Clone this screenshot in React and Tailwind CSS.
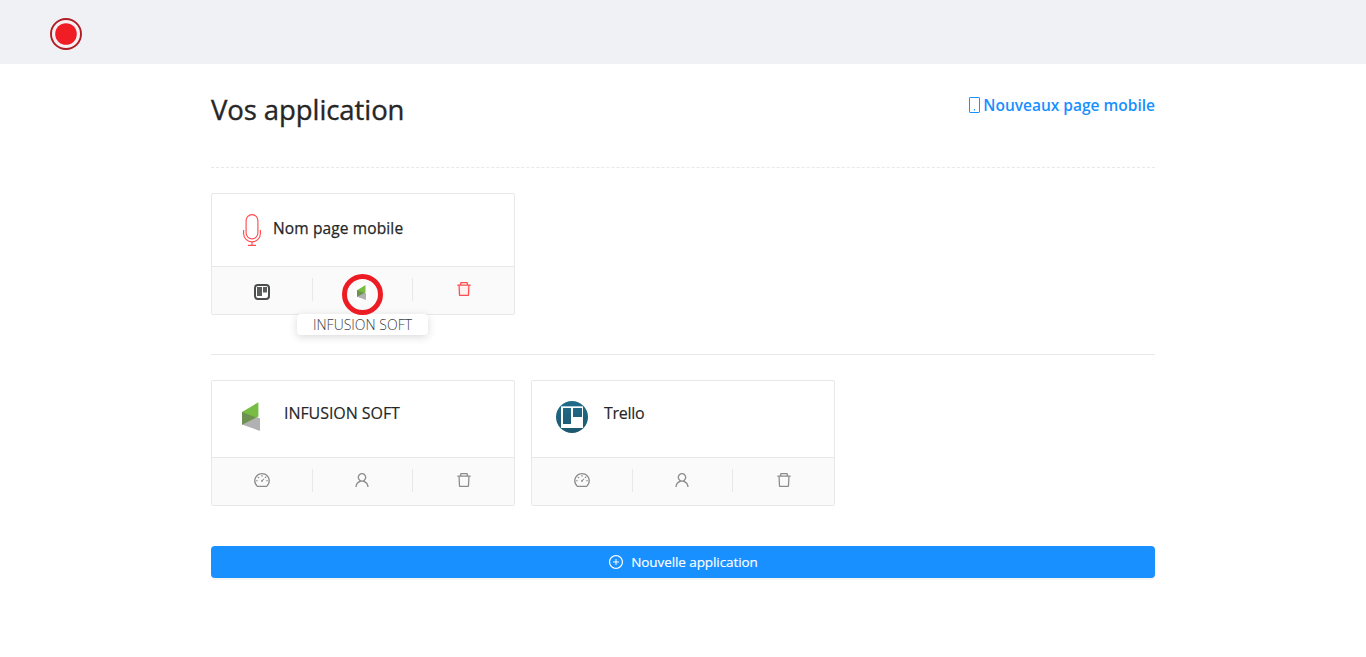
import {
  AiOutlineDashboard,
  AiOutlineUser,
  AiOutlineDelete,
  AiOutlinePlusCircle,
} from "react-icons/ai";

function RecordLogo() {
  return (
    <svg className="block size-8" viewBox="0 0 32 32">
      <circle cx="16" cy="16" r="15" fill="#f7f0f3" stroke="#b01c24" strokeWidth="1.9" />
      <circle cx="16" cy="16" r="10.8" fill="#f01e24" />
    </svg>
  );
}

function PhoneIcon() {
  return (
    <svg className="block h-4 w-[11px]" viewBox="0 0 11 16">
      <rect x="0.5" y="0.5" width="10" height="15" rx="0.6" fill="#fff" stroke="#1890ff" />
      <rect x="5" y="12" width="1" height="1.5" fill="#1890ff" />
    </svg>
  );
}

function MicIcon() {
  return (
    <svg className="block h-8 w-[18px]" viewBox="0 0 18 32" fill="none" stroke="#ff4d4f" strokeWidth="1.15">
      <rect x="3.1" y="0.6" width="11.8" height="24.2" rx="5.9" />
      <path d="M0.6 16V19.4A8.4 8.4 0 0 0 17.4 19.4V16M9 27.8V31.3M5 31.4H13" />
    </svg>
  );
}

function InfusionLogo({ className }) {
  return (
    <svg className={className} viewBox="0 0 18 29">
      <path d="M0 10L18 16.2V29L0 22.6Z" fill="#b1b1b3" />
      <path d="M0 10L16.4 0.2V14.6L0 22.6Z" fill="#78bc43" />
      <path d="M0 10L14 15.6L0 22.8Z" fill="#6c9151" />
    </svg>
  );
}

function TrelloRound() {
  return (
    <svg className="block size-8" viewBox="0 0 32 32">
      <defs>
        <linearGradient id="trello-fill" x1="0" y1="0" x2="0" y2="1">
          <stop offset="0" stopColor="#206d8b" />
          <stop offset="1" stopColor="#1c576e" />
        </linearGradient>
      </defs>
      <circle cx="16" cy="16" r="16" fill="url(#trello-fill)" />
      <path
        fill="#fff"
        fillRule="evenodd"
        d="M5 5H27V27H5ZM7.5 7H14.5Q15 7 15 7.5V22.5Q15 23 14.5 23H7.5Q7 23 7 22.5V7.5Q7 7 7.5 7ZM17.5 7H25.5Q26 7 26 7.5V15.5Q26 16 25.5 16H17.5Q17 16 17 15.5V7.5Q17 7 17.5 7Z"
      />
      <path d="M5 5.5H27" stroke="#b4d0da" strokeWidth="1" />
    </svg>
  );
}

function TrelloSquare() {
  return (
    <svg className="block size-4" viewBox="0 0 16 16">
      <rect x="1" y="1" width="14" height="14" rx="3" fill="#fff" stroke="#4a4d4b" strokeWidth="2" />
      <rect x="3" y="3" width="5" height="9" fill="#5a5d5b" />
      <rect x="9" y="3" width="4" height="5.5" fill="#5a5d5b" />
    </svg>
  );
}

function Actions({ children }) {
  return (
    <div className="grid h-[48px] grid-cols-[100px_100px_102px] border-t border-[#e8e8e8] bg-[#fafafa] text-[#8c8c8c]">
      {children}
    </div>
  );
}

function Action({ children, last = false, className = "" }) {
  return (
    <div className={`relative flex justify-center ${className}`}>
      {children}
      {!last && <span className="absolute -right-px top-[11px] h-[23px] w-px bg-[#e8e8e8]" />}
    </div>
  );
}

function AppCard({ logo, name, nameClass }) {
  return (
    <article className="h-[126px] w-[304px] overflow-hidden rounded-[2px] border border-[#e8e8e8]">
      <div className="flex h-[76px] pl-6 pt-5">
        <div className="flex size-8 justify-center">{logo}</div>
        <h3 className={`ml-4 text-[16px] leading-6 text-[#262626] [-webkit-text-stroke:0.15px] ${nameClass}`}>{name}</h3>
      </div>
      <Actions>
        <Action className="pt-[13px]"><AiOutlineDashboard size={18} /></Action>
        <Action className="pt-[13px]"><AiOutlineUser size={18} /></Action>
        <Action className="pl-[2px] pt-[13px]" last><AiOutlineDelete size={18} /></Action>
      </Actions>
    </article>
  );
}

export default function App() {
  return (
    <div className="h-[657px] bg-white font-['Open_Sans',sans-serif]">
      <header className="h-16 bg-[#f0f1f5] pl-[50px] pt-[18px]">
        <RecordLogo />
      </header>
      <main className="mx-auto flex w-[944px] flex-col">
        <div className="flex h-[104px] items-start justify-between border-b border-dashed border-[#e8e8e8]">
          <h1 className="whitespace-nowrap pt-[27px] text-[27.5px] leading-[38px] tracking-[-0.08px] text-[#262626] [-webkit-text-stroke:0.35px]">
            Vos application
          </h1>
          <a className="flex items-center whitespace-nowrap pt-[29px] text-[16px] leading-6 text-[#1890ff]">
            <PhoneIcon />
            <span className="ml-[3px] text-[15.5px] font-semibold">Nouveaux page mobile</span>
          </a>
        </div>

        <article className="mt-[25px] h-[122px] w-[304px] rounded-[2px] border border-[#e8e8e8]">
          <div className="flex h-[72px] pl-[31px] pt-5">
            <MicIcon />
            <h3 className="ml-[12px] whitespace-nowrap pt-[2px] text-[15.5px] leading-6 tracking-[0.13px] text-[#262626] [-webkit-text-stroke:0.25px]">
              Nom page mobile
            </h3>
          </div>
          <Actions>
            <Action className="pt-[17px]"><TrelloSquare /></Action>
            <Action className="pt-[17px]">
              <span className="flex size-4 items-center rounded-[4px] bg-white pl-[3px]">
                <InfusionLogo className="block h-[15px] w-[9.3px]" />
              </span>
              <span className="absolute left-[-15px] top-[47px] z-10 flex h-[21px] w-[131px] items-center justify-center whitespace-nowrap rounded-[4px] bg-white text-[14px] font-light leading-[21px] text-[#404040] shadow-[0_2px_8px_rgba(0,0,0,0.15)]">
                INFUSION SOFT
              </span>
              <span className="absolute left-[30px] top-[7px] z-20 size-[41px] rounded-full border-[5px] border-[#ed1c24]" />
            </Action>
            <Action className="pl-[2px] pt-[13px] text-[#ff4d4f]" last>
              <span className="relative block size-[18px]">
                <span className="absolute left-[5px] top-[6px] h-[9px] w-[9px] bg-[#fff1f0]" />
                <AiOutlineDelete className="relative" size={18} />
              </span>
            </Action>
          </Actions>
        </article>

        <hr className="mt-[39px] border-t border-[#e8e8e8]" />

        <section className="mt-[25px] flex gap-4">
          <AppCard
            logo={<InfusionLogo className="mr-[2px] mt-px block h-[29px] w-[18px]" />}
            name="INFUSION SOFT"
            nameClass="tracking-[-0.06px]"
          />
          <AppCard logo={<TrelloRound />} name="Trello" nameClass="tracking-[-0.3px]" />
        </section>

        <button className="mt-10 flex h-8 items-center justify-center gap-[7px] rounded-[4px] bg-[#1890ff] text-[13.5px] leading-5 text-white shadow-[0_2px_0_rgba(0,0,0,0.045)]">
          <AiOutlinePlusCircle size={16} />
          <span className="tracking-[-0.08px] [-webkit-text-stroke:0.15px]">Nouvelle application</span>
        </button>
      </main>
    </div>
  );
}
